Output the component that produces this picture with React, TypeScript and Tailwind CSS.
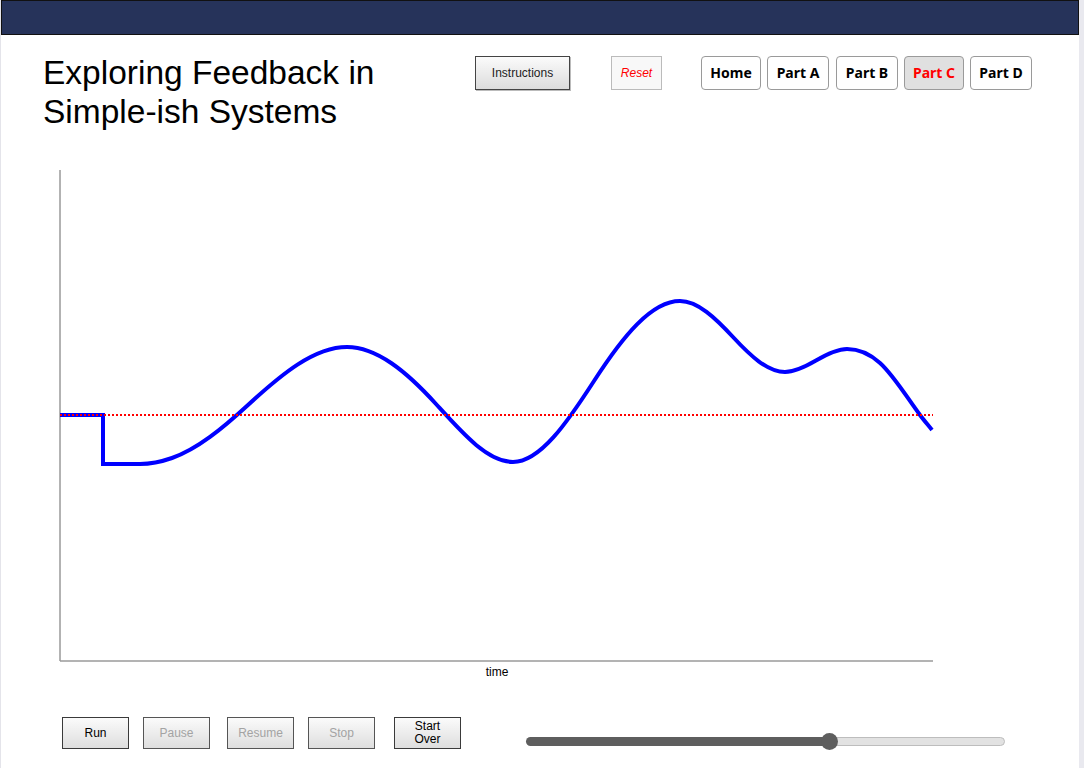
import React from "react";

// [x, y, slope dy/dx]
const pts: [number, number, number][] = [
  [140, 464, 0],
  [172, 458, -0.35],
  [248, 405, -0.92],
  [347, 347, 0],
  [436, 404, 1.1],
  [513, 462, 0],
  [594, 381, -1.55],
  [680, 301, 0],
  [733, 337, 1.08],
  [785, 372, 0],
  [816, 360.5, -0.58],
  [847, 349, 0],
  [880, 363, 0.9],
  [920, 415, 1.35],
  [932, 430, 1.25],
];

function buildPath(): string {
  let d = `M60,415 L103,415 L103,464 L140,464`;
  for (let i = 0; i < pts.length - 1; i++) {
    const [x0, y0, m0] = pts[i];
    const [x1, y1, m1] = pts[i + 1];
    const h = (x1 - x0) / 3;
    d += ` C${(x0 + h).toFixed(2)},${(y0 + m0 * h).toFixed(2)} ${(x1 - h).toFixed(2)},${(y1 - m1 * h).toFixed(2)} ${x1},${y1}`;
  }
  return d;
}

const curve = buildPath();

function NavBtn({ label, active, className }: { label: string; active?: boolean; className?: string }) {
  return (
    <button
      className={
        "h-[34px] rounded-[4px] border border-[#9a9a9a] text-[14px] font-bold leading-none " +
        (active ? "bg-[#e0e0e0] text-[#ff0000] " : "bg-white text-black ") +
        (className ?? "")
      }
      style={{ fontFamily: '"Noto Sans", sans-serif' }}
    >
      {label}
    </button>
  );
}

function CtlBtn({ label, disabled, className }: { label: React.ReactNode; disabled?: boolean; className?: string }) {
  return (
    <button
      className={
        "h-[32px] w-[67px] border border-[#3a3a3a] bg-linear-to-b from-[#fbfbfb] to-[#dedede] text-[12px] leading-[13px] " +
        (disabled ? "text-[#a3a3a3] " : "text-black ") +
        (className ?? "")
      }
    >
      {label}
    </button>
  );
}

export default function App() {
  return (
    <div
      className="flex h-[768px] w-[1084px] overflow-hidden bg-white"
      style={{ fontFamily: '"Liberation Sans", Arial, sans-serif' }}
    >
      <div className="flex w-[1079px] flex-col border-l border-[#e4e4ea]">
        <div className="h-[35px] w-[1078px] border border-[#111] bg-[#26335a]" />

        <div className="flex h-[125px] items-start">
          <h1 className="ml-[42px] mt-[18px] w-[432px] text-[33.5px] font-normal leading-[39px] text-black">
            Exploring Feedback in
            <br />
            Simple-ish Systems
          </h1>
          <button className="mt-[21px] h-[34px] w-[95px] border border-[#444] bg-linear-to-b from-[#fbfbfb] to-[#dcdcdc] text-[12px] text-[#222] shadow-[1px_1px_0_#bbb]">
            Instructions
          </button>
          <button className="ml-[41px] mt-[21px] h-[34px] w-[51px] border border-[#bbb] bg-[#f8f8f8] text-[12px] italic text-[#ff0000]">
            Reset
          </button>
          <div className="ml-[39px] mt-[21px] flex gap-[6px]">
            <NavBtn label="Home" className="w-[60px]" />
            <NavBtn label="Part A" className="w-[62px]" />
            <NavBtn label="Part B" className="ml-[1px] w-[62px]" />
            <NavBtn label="Part C" active className="w-[60px]" />
            <NavBtn label="Part D" className="w-[62px]" />
          </div>
        </div>

        <svg width="1078" height="525" viewBox="1 160 1078 525" className="block">
          <line x1="60" y1="170" x2="60" y2="661" stroke="#666" strokeWidth="1" />
          <line x1="60" y1="661" x2="933" y2="661" stroke="#9a9a9a" strokeWidth="1.5" />
          <path d={curve} fill="none" stroke="#0000ff" strokeWidth="4" strokeLinejoin="miter" />
          <line x1="60" y1="415" x2="933" y2="415" stroke="#ff0000" strokeWidth="2" strokeDasharray="2 2" />
          <text x="497" y="676" textAnchor="middle" fontSize="12" fill="#000" fontFamily='"Liberation Sans", Arial, sans-serif'>
            time
          </text>
        </svg>

        <div className="mt-[32px] flex items-center">
          <CtlBtn label="Run" className="ml-[61px]" />
          <CtlBtn label="Pause" disabled className="ml-[14px] border-[#555]" />
          <CtlBtn label="Resume" disabled className="ml-[17px] border-[#555]" />
          <CtlBtn label="Stop" disabled className="ml-[14px] border-[#555]" />
          <CtlBtn label={<>Start<br />Over</>} className="ml-[19px]" />
          <div className="relative ml-[65px] mt-[16px] flex h-[9px] w-[479px] items-center">
            <div className="h-[9px] w-[303px] rounded-l-full bg-[#5e5e5e]" />
            <div className="h-[9px] flex-1 rounded-r-full border border-[#bdbdbd] bg-[#e2e2e2]" />
            <div className="absolute left-[295px] top-[-4px] h-[17px] w-[17px] rounded-full bg-[#5e5e5e]" />
          </div>
        </div>
      </div>
      <div className="h-[768px] w-[5px] bg-[#e9e9ef]" />
    </div>
  );
}
